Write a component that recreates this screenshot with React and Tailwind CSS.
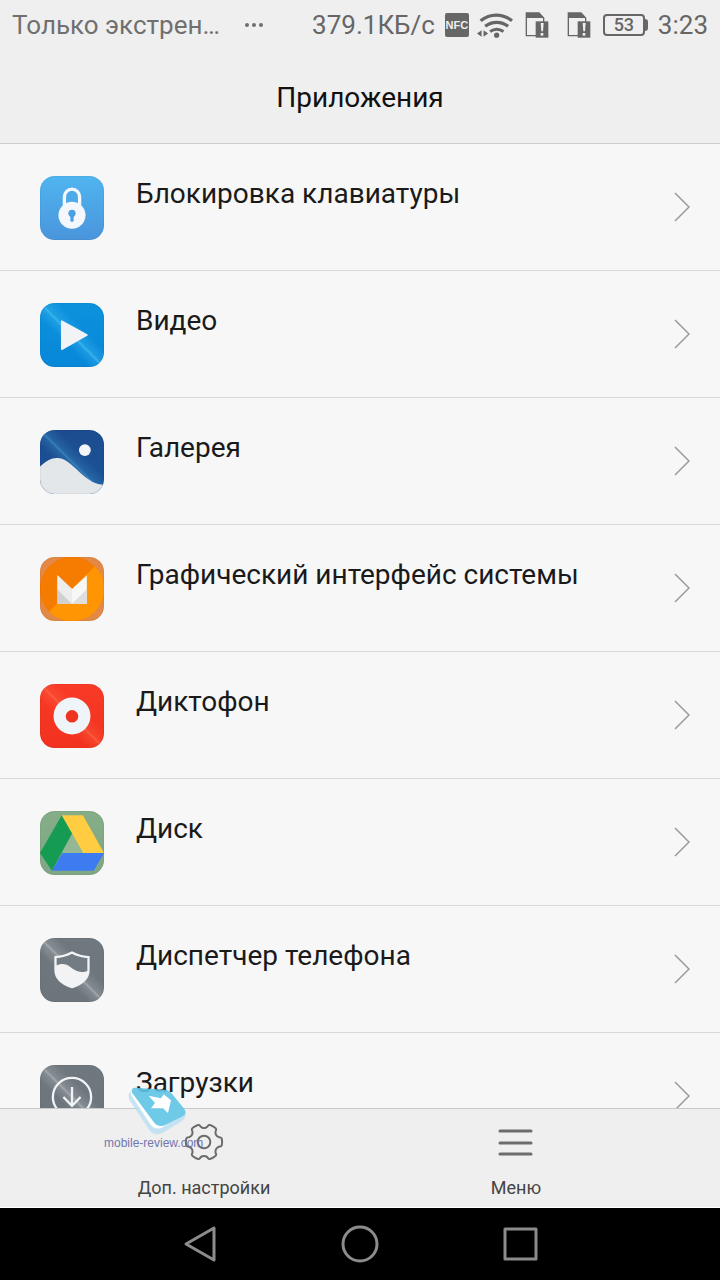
const apps = [
  { name: "Блокировка клавиатуры", Icon: LockIcon },
  { name: "Видео", Icon: VideoIcon },
  { name: "Галерея", Icon: GalleryIcon },
  { name: "Графический интерфейс системы", Icon: SystemUiIcon },
  { name: "Диктофон", Icon: RecorderIcon },
  { name: "Диск", Icon: DriveIcon },
  { name: "Диспетчер телефона", Icon: ManagerIcon },
  { name: "Загрузки", Icon: DownloadsIcon },
];

// rounded square shared by all launcher icons
function Tile({ id, stops, shine, children }) {
  return (
    <svg viewBox="29 29 194 194" className="size-16 shrink-0" aria-hidden="true">
      <defs>
        <linearGradient id={id} x1="0" y1="0" x2="0" y2="1">
          <stop offset="0" stopColor={stops[0]} />
          <stop offset="1" stopColor={stops[1]} />
        </linearGradient>
        <linearGradient id={`${id}-shine`} x1="0" y1="1" x2="1" y2="0">
          <stop offset="0.38" stopColor={shine} stopOpacity="0" />
          <stop offset="0.48" stopColor={shine} stopOpacity="0.3" />
          <stop offset="0.5" stopColor={shine} stopOpacity="0.7" />
          <stop offset="0.52" stopColor={shine} stopOpacity="0.3" />
          <stop offset="0.64" stopColor={shine} stopOpacity="0" />
        </linearGradient>
        <clipPath id={`${id}-clip`}>
          <rect x="29" y="29" width="194" height="194" rx="45" />
        </clipPath>
      </defs>
      <g clipPath={`url(#${id}-clip)`}>
        <rect x="29" y="29" width="194" height="194" fill={`url(#${id})`} />
        {shine && <rect x="29" y="29" width="194" height="194" fill={`url(#${id}-shine)`} />}
        {children}
      </g>
      <rect x="30" y="30" width="192" height="192" rx="44" fill="none" stroke="#000" strokeOpacity="0.08" strokeWidth="2" />
    </svg>
  );
}

function LockIcon() {
  return (
    <Tile id="lock" stops={["#4fb5ef", "#4a95dc"]}>
      <path d="M103 122V92a23 23 0 0 1 46 0v30" fill="none" stroke="#f4f8fc" strokeWidth="10" />
      <circle cx="126" cy="148" r="41" fill="#f4f8fc" />
      <circle cx="126" cy="142" r="11" fill="#4aa0e2" />
      <rect x="121" y="146" width="10" height="22" rx="4" fill="#4aa0e2" />
    </Tile>
  );
}

function VideoIcon() {
  return (
    <Tile id="video" stops={["#0c92dd", "#0787d8"]} shine="#4cc4f5">
      <path d="M95 84l76 42-76 43z" fill="#f1f3f6" stroke="#f1f3f6" strokeWidth="5" strokeLinejoin="round" />
    </Tile>
  );
}

function GalleryIcon() {
  return (
    <Tile id="gallery" stops={["#1c4c8f", "#1a5499"]} shine="#3f94c8">
      <circle cx="165" cy="90" r="18" fill="#f4f7fa" />
      <path d="M29 140C48 122 66 112 84 114c26 2 48 28 72 49 22 19 42 32 67 32v28H29z" fill="#e3e7e9" />
    </Tile>
  );
}

function SystemUiIcon() {
  return (
    <Tile id="systemui" stops={["#e28a45", "#e28a45"]}>
      <circle cx="126" cy="126" r="98" fill="#f57c00" />
      <path d="M195.3 56.7A98 98 0 0 1 56.7 195.3z" fill="#ff9502" />
      <path d="M82 84l44 42 45-42v87H82z" fill="#f7f7f7" />
      <path d="M82 127l44 44H82z" fill="#d0d0d0" />
      <path d="M82 84l44 42v45L82 127z" fill="#ededed" />
      <path d="M171 127l-45 44h45z" fill="#dedede" />
    </Tile>
  );
}

function RecorderIcon() {
  return (
    <Tile id="recorder" stops={["#f83a26", "#f2321f"]} shine="#ff6a4a">
      <circle cx="126" cy="126" r="56" fill="#eff4f8" />
      <circle cx="126" cy="127" r="19" fill="#ee3421" />
    </Tile>
  );
}

function DriveIcon() {
  return (
    <Tile id="drive" stops={["#85ad88", "#7fa784"]}>
      <path d="M126 95l35 61H92z" fill="#94b796" />
      <path d="M95 42l32 54-62 114-36-54z" fill="#159b52" />
      <path d="M95 42h64l64 114h-63z" fill="#ffcc42" />
      <path d="M97 156h126l-31 54H65z" fill="#3c7cf0" />
    </Tile>
  );
}

function ManagerIcon() {
  return (
    <Tile id="manager" stops={["#70787f", "#6c757c"]} shine="#b6bcc0">
      <path
        d="M126 73c15 8 31 13 50 14v40c0 24-20 41-50 51-30-10-50-27-50-51V87c19-1 35-6 50-14z"
        fill="#737c83"
        stroke="#f1f3f4"
        strokeWidth="7"
      />
      <path d="M77 113c14-7 28-8 41 2 17 14 32 22 58 13-1 23-20 40-50 50-30-10-49-27-49-51z" fill="#f1f3f4" />
    </Tile>
  );
}

function DownloadsIcon() {
  return (
    <Tile id="downloads" stops={["#70787f", "#6c757c"]} shine="#b6bcc0">
      <circle cx="126" cy="126" r="58" fill="none" stroke="#f1f3f4" strokeWidth="7" />
      <path d="M126 96v56M100 126l26 27 26-27" fill="none" stroke="#f1f3f4" strokeWidth="7" />
    </Tile>
  );
}

function WifiIcon() {
  return (
    <svg viewBox="138 32 110 78" className="h-[26px] w-9" fill="none" stroke="#666" aria-hidden="true">
      <path d="M149 58c29-23 67-23 96 0" strokeWidth="10" />
      <path d="M163 75c21-16 49-16 70 0" strokeWidth="10" />
      <path d="M178 91c13-9 28-9 41 0" strokeWidth="9" />
      <circle cx="198" cy="102" r="8" fill="#666" stroke="none" />
      <path d="M152 87v20l-14-10zM158 87v20l14-10z" fill="#666" stroke="none" />
    </svg>
  );
}

function SimIcon() {
  return (
    <svg viewBox="284 33 72 78" className="h-[26px] w-6" aria-hidden="true">
      <path d="M288 36h38l14 15v53h-52z" fill="#efefef" stroke="#666" strokeWidth="4" />
      <path d="M288 36h38l14 15H288z" fill="#666" />
      <rect x="316" y="61" width="38" height="49" fill="#666" />
      <path d="M331 66h9l-2 25h-5z" fill="#efefef" />
      <rect x="331" y="96" width="8" height="8" fill="#efefef" />
    </svg>
  );
}

function Battery({ level }) {
  return (
    <div className="flex items-center">
      <span className="flex h-[22px] w-[42px] items-center justify-center rounded border-2 border-[#666] text-lg font-medium leading-none">
        {level}
      </span>
      <span className="h-3 w-[3px] rounded-r bg-[#666]" />
    </div>
  );
}

// closed smooth outline with six teeth
function gearPath() {
  const points = [];
  for (let i = 0; i < 6; i++) {
    [[-17, 46], [-14, 56], [14, 56], [17, 46], [30, 41]].forEach(([shift, r]) => {
      const a = ((i * 60 + shift) * Math.PI) / 180;
      points.push([60 + r * Math.cos(a), 60 + r * Math.sin(a)]);
    });
  }
  const mid = (p, q) => `${(p[0] + q[0]) / 2} ${(p[1] + q[1]) / 2}`;
  const last = points[points.length - 1];
  let d = `M${mid(last, points[0])}`;
  points.forEach((p, i) => {
    d += `Q${p[0]} ${p[1]} ${mid(p, points[(i + 1) % points.length])}`;
  });
  return `${d}Z`;
}

function GearIcon() {
  return (
    <svg viewBox="0 0 120 120" className="size-10" fill="none" stroke="#6c6c6c" strokeWidth="6" aria-hidden="true">
      <path d={gearPath()} />
      <circle cx="60" cy="60" r="19" />
    </svg>
  );
}

function MenuIcon() {
  return (
    <svg viewBox="0 0 40 40" className="size-10" stroke="#6c6c6c" strokeWidth="3" strokeLinecap="round" aria-hidden="true">
      <path d="M4 9h31M4 21h31M4 32h31" />
    </svg>
  );
}

function Watermark() {
  return (
    <div className="pointer-events-none absolute -top-6 left-[104px] flex flex-col items-start">
      <svg viewBox="295 80 180 150" className="ml-6 h-[50px] w-[60px]" aria-hidden="true">
        <path d="M297 112c0-10 6-14 14-14l156 60c2 14 0 22-10 30l-58 36c-14 6-28 5-38-6l-60-90c-3-6-4-10-4-16z" fill="#b9dff2" opacity="0.8" />
        <path d="M304 98c-2 8 2 14 6 20l52 80c10 14 24 16 38 8l60-36c6-4 9-9 8-16z" fill="#fff" />
        <path d="M318 88l86 6c12 1 18 5 24 14l36 44c6 8 5 16-5 22l-50 25c-14 7-28 4-37-8l-62-84c-7-10-4-20 8-19z" fill="#5fc4e4" opacity="0.9" />
        <path d="M357 112l37 8 8-12 22 18-9 38-15-14h-36l12-16z" fill="#fff" />
      </svg>
      <span className="font-['Liberation_Sans',sans-serif] text-xs leading-4 text-[#7376ad]">
        mobile-review.com
      </span>
    </div>
  );
}

function StatusBar() {
  return (
    <div className="flex h-[50px] items-center px-3 text-[26px] text-[#707070]">
      <span>Только экстрен…</span>
      <svg viewBox="0 0 20 6" className="ml-6 h-[6px] w-5" fill="#707070" aria-hidden="true">
        <circle cx="3" cy="3" r="2" />
        <circle cx="10" cy="3" r="2" />
        <circle cx="17" cy="3" r="2" />
      </svg>
      <div className="ml-auto flex items-center text-[#666]">
        <span>379.1КБ/с</span>
        <span className="ml-[10px] flex size-6 items-center justify-center rounded-xs bg-[#666] font-['Liberation_Sans',sans-serif] text-[11px] font-bold text-[#efefef]">
          NFC
        </span>
        <span className="ml-2"><WifiIcon /></span>
        <span className="ml-3"><SimIcon /></span>
        <span className="ml-[18px]"><SimIcon /></span>
        <span className="ml-3"><Battery level={53} /></span>
        <span className="ml-[10px]">3:23</span>
      </div>
    </div>
  );
}

function AppRow({ name, Icon }) {
  return (
    <li>
      <button type="button" className="flex h-[127px] w-full items-start border-b border-[#d9d9d9] pt-8 pr-[30px] pl-10 text-left">
        <Icon />
        <span className="ml-8 flex-1 text-[28px] leading-9 text-[#1a1a1a]">{name}</span>
        <svg viewBox="0 0 16 30" className="mt-4 h-[30px] w-4" fill="none" stroke="#9a9a9a" strokeWidth="1.5" aria-hidden="true">
          <path d="M1 1l14 14L1 29" />
        </svg>
      </button>
    </li>
  );
}

export default function App() {
  return (
    <div className="flex h-screen flex-col bg-[#f7f7f7] font-[Roboto,sans-serif]">
      <header className="border-b border-[#cdcdcd] bg-[#efefef]">
        <StatusBar />
        <h1 className="h-[93px] pt-[30px] text-center text-[28px] leading-9 text-[#111]">Приложения</h1>
      </header>

      <main className="min-h-0 flex-1 overflow-y-auto [scrollbar-width:none]">
        <ul>
          {apps.map((app) => (
            <AppRow key={app.name} {...app} />
          ))}
        </ul>
      </main>

      <footer className="relative border-t border-b border-t-[#c8c8c8] border-b-white bg-[#efefef] px-12">
        <div className="grid h-[98px] grid-cols-2">
          <button type="button" className="flex flex-col items-center pt-[13px] text-lg text-[#444]">
            <GearIcon />
            <span className="mt-3">Доп. настройки</span>
          </button>
          <button type="button" className="flex flex-col items-center pt-[13px] text-lg text-[#444]">
            <MenuIcon />
            <span className="mt-3">Меню</span>
          </button>
        </div>
        <Watermark />
      </footer>

      <nav className="grid h-[72px] grid-cols-3 bg-black px-[120px]">
        <button type="button" aria-label="Назад" className="flex items-center justify-center">
          <svg viewBox="0 0 40 40" className="size-10" fill="none" stroke="#8c8c8c" strokeWidth="3" strokeLinejoin="round">
            <path d="M6 20L34 4v32z" />
          </svg>
        </button>
        <button type="button" aria-label="Домой" className="flex items-center justify-center">
          <svg viewBox="0 0 40 40" className="size-10" fill="none" stroke="#8c8c8c" strokeWidth="3">
            <circle cx="20" cy="20" r="17" />
          </svg>
        </button>
        <button type="button" aria-label="Недавние" className="flex items-center justify-center">
          <svg viewBox="0 0 40 40" className="size-10" fill="none" stroke="#8c8c8c" strokeWidth="3" strokeLinejoin="round">
            <rect x="5" y="5" width="31" height="30" />
          </svg>
        </button>
      </nav>
    </div>
  );
}
